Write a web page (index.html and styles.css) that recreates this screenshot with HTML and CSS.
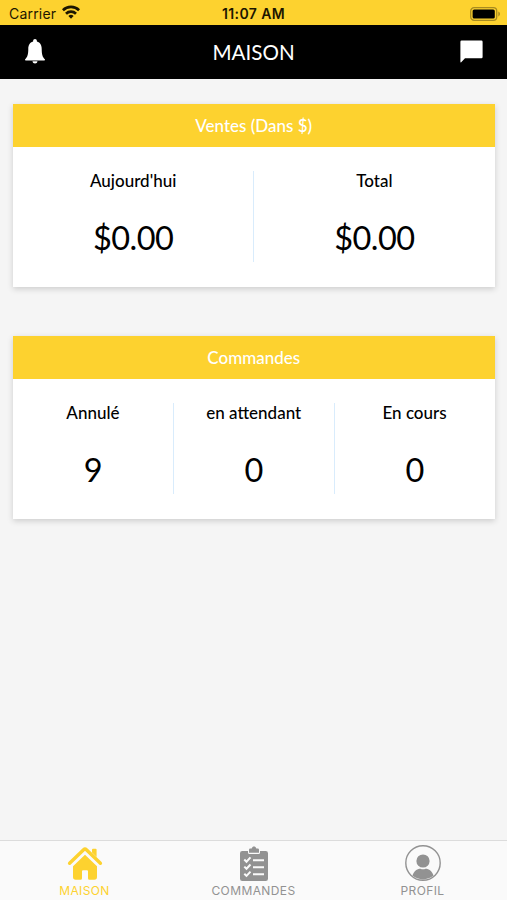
FILE: index.html
```html
<!DOCTYPE html>
<html lang="fr">
<head>
    <meta charset="UTF-8">
    <meta name="viewport" content="width=device-width, initial-scale=1.0">
    <title>Maison</title>
    <link rel="stylesheet" href="styles.css">
</head>
<body>
    <!-- Status Bar -->
    <div class="status-bar">
        <div class="carrier">
            <span>Carrier</span>
            <svg width="18" height="14" viewBox="0 0 18 14" fill="none" stroke="#1c1600" stroke-width="2.7">
                <path d="M0.9 5.2a11.5 11.5 0 0 1 16.2 0"/>
                <path d="M4 8.7a7.1 7.1 0 0 1 10 0"/>
                <path d="M9 13.8l-2.6-2.7a3.7 3.7 0 0 1 5.2 0z" fill="#1c1600" stroke="none"/>
            </svg>
        </div>
        <div class="time">11:07 AM</div>
        <div class="battery">
            <svg width="31" height="14" viewBox="0 0 31 14">
                <rect x="0.7" y="0.7" width="26" height="12.6" rx="3.4" fill="none" stroke="#a88b20" stroke-width="1.3"/>
                <rect x="2.6" y="2.4" width="22.2" height="9.2" rx="1.6" fill="#000"/>
                <path d="M28.3 4.6c2.2 0.8 2.2 4 0 4.8z" fill="#a88b20"/>
            </svg>
        </div>
    </div>

    <!-- Header -->
    <header class="header">
        <svg class="bell" width="20" height="25" viewBox="0 0 20 25" fill="#fff">
            <path d="M10 0C8.900 0 8.100 0.800 8.100 1.900v0.700C4.700 3.500 3.300 6.500 3.300 10c0 5.800-1 8.200-3.100 10.300-0.500 0.500-0.100 1.200 0.500 1.200h18.600c0.600 0 1-0.700 0.500-1.200C17.700 18.200 16.700 15.800 16.700 10c0-3.500-1.400-6.500-4.800-7.400v-0.700C11.900 0.800 11.100 0 10 0z"/>
            <path d="M7.500 22.300h5c-0.200 1.400-1.200 2.200-2.500 2.200s-2.300-0.800-2.500-2.200z"/>
        </svg>
        <h1>MAISON</h1>
        <svg class="chat" width="23" height="23" viewBox="0 0 23 23" fill="#fff">
            <path d="M1.600 0.500h19.800a1.200 1.200 0 0 1 1.200 1.200v15.400a1.200 1.200 0 0 1-1.200 1.200H5L1.200 22.200c-0.400 0.400-0.800 0.200-0.800-0.400V1.700a1.200 1.200 0 0 1 1.200-1.200z"/>
        </svg>
    </header>

    <!-- Cards -->
    <main class="content">
        <section class="card">
            <h2>Ventes (Dans $)</h2>
            <div class="stats">
                <div class="stat">
                    <p class="label">Aujourd'hui</p>
                    <p class="value">$0.00</p>
                </div>
                <div class="stat">
                    <p class="label">Total</p>
                    <p class="value">$0.00</p>
                </div>
            </div>
        </section>

        <section class="card">
            <h2>Commandes</h2>
            <div class="stats">
                <div class="stat">
                    <p class="label">Annulé</p>
                    <p class="value">9</p>
                </div>
                <div class="stat">
                    <p class="label">en attendant</p>
                    <p class="value">0</p>
                </div>
                <div class="stat">
                    <p class="label">En cours</p>
                    <p class="value">0</p>
                </div>
            </div>
        </section>
    </main>

    <!-- Tab Bar -->
    <nav class="tab-bar">
        <a class="tab active">
            <svg width="36" height="36" viewBox="0 0 36 36" fill="currentColor">
                <path d="M2.600 18.300L16.600 4.700a2 2 0 0 1 2.800 0L33.400 18.300" fill="none" stroke="currentColor" stroke-width="3.400" stroke-linecap="round"/>
                <path d="M26 3.700h2.600a1 1 0 0 1 1 1v7.300l-4.600-4.400V4.700a1 1 0 0 1 1-1z"/>
                <path d="M18 9.800L30 21.200V32a2.700 2.700 0 0 1-2.700 2.700H22.500a1.500 1.500 0 0 1-1.500-1.500v-7a1 1 0 0 0-1-1h-4a1 1 0 0 0-1 1v7a1.500 1.500 0 0 1-1.500 1.500H8.700A2.700 2.700 0 0 1 6 32V21.200z"/>
            </svg>
            <span>MAISON</span>
        </a>
        <a class="tab">
            <svg width="36" height="36" viewBox="0 0 36 36">
                <path d="M6.300 6H12v1.500a1.500 1.500 0 0 0 1.500 1.500h9A1.500 1.500 0 0 0 24 7.500V6h5.700a2.300 2.300 0 0 1 2.300 2.300v25.400a2.300 2.300 0 0 1-2.300 2.300H6.300A2.300 2.300 0 0 1 4 33.700V8.300A2.300 2.300 0 0 1 6.300 6z" fill="currentColor"/>
                <path d="M13 7.700V4.700a1.200 1.200 0 0 1 1.200-1.200h1.500C16 2 16.900 1.400 18 1.400s2 0.600 2.300 2.100h1.500A1.200 1.200 0 0 1 23 4.700v3z" fill="currentColor"/>
                <path d="M8.300 14.500l2.200 2.200 4-4.300M8.300 21.600l2.200 2.200 4-4.300M8.300 28.700l2.200 2.200 4-4.300" fill="none" stroke="#fafafa" stroke-width="2"/>
                <path d="M17 15.200h11M17 22.200h11M17 29.200h11" stroke="#fafafa" stroke-width="2"/>
            </svg>
            <span>COMMANDES</span>
        </a>
        <a class="tab">
            <svg width="36" height="36" viewBox="0 0 36 36" fill="currentColor">
                <circle cx="18" cy="18" r="17.200" fill="none" stroke="currentColor" stroke-width="1.400"/>
                <circle cx="18" cy="16" r="6.600"/>
                <path d="M7.500 30.600c1.300-4.400 4.400-6.800 8-6.800 1.600 0.700 3.400 0.700 5 0 3.600 0 6.700 2.400 8 6.800A16.300 16.300 0 0 1 7.500 30.600z"/>
            </svg>
            <span>PROFIL</span>
        </a>
    </nav>
</body>
</html>
```
FILE: styles.css
```css
/* Reset default styles */
* {
    margin: 0;
    padding: 0;
    box-sizing: border-box;
}

body {
    font-family: Lato, sans-serif;
    background-color: #f5f5f5;
    color: #000;
    display: flex;
    flex-direction: column;
    height: 100vh;
    overflow: hidden;
}

/* Status Bar */
.status-bar {
    display: grid;
    grid-template-columns: 1fr auto 1fr;
    align-items: center;
    height: 25px;
    padding: 2px 6px 0 9px;
    background-color: #fdd22f;
    font-family: Inter, sans-serif;
    font-size: 14px;
    color: #1c1600;
}

.carrier {
    display: flex;
    align-items: center;
    gap: 6px;
    letter-spacing: 0.2px;
}

.carrier svg {
    margin-top: -3px;
}

.time {
    margin-right: 3px;
    font-weight: 600;
    letter-spacing: 0.4px;
}

.battery {
    display: flex;
    justify-content: flex-end;
}

/* Header */
.header {
    display: flex;
    justify-content: space-between;
    align-items: center;
    height: 54px;
    padding: 0 24px 1px 25px;
    background-color: #000;
    color: #fff;
}

.header h1 {
    padding-left: 2px;
    font-size: 20.6px;
    font-weight: 400;
}

/* Cards */
.content {
    flex: 1;
    display: flex;
    flex-direction: column;
    gap: 49px;
    padding: 24.6px 12.5px 0 13px;
}

.card {
    height: 183px;
    background-color: #fff;
    box-shadow: 0 2px 6px rgba(0, 0, 0, 0.17);
}

.card h2 {
    height: 43px;
    line-height: 43px;
    background-color: #fdd22f;
    color: #fff;
    font-size: 17px;
    font-weight: 500;
    text-align: center;
}

.stats {
    display: flex;
    padding: 24px 0;
}

.stat {
    flex: 1;
    height: 91px;
    text-align: center;
}

.stat + .stat {
    border-left: 1px solid #d9ecfc;
}

.label {
    font-size: 17px;
    font-weight: 500;
    line-height: 20px;
}

.value {
    margin-top: 26px;
    font-size: 32.5px;
    line-height: 41px;
    letter-spacing: -0.6px;
}

/* Tab Bar */
.tab-bar {
    display: flex;
    height: 60px;
    background-color: #fafafa;
    border-top: 1px solid #dcdcdc;
}

.tab {
    flex: 1;
    display: flex;
    flex-direction: column;
    align-items: center;
    padding-top: 4px;
    color: #929292;
}

.tab span {
    margin-top: 3px;
    font-family: Inter, sans-serif;
    font-size: 12px;
    font-weight: 400;
    line-height: 14px;
    letter-spacing: 0.4px;
}

.tab.active {
    color: #fdd22f;
}
```
